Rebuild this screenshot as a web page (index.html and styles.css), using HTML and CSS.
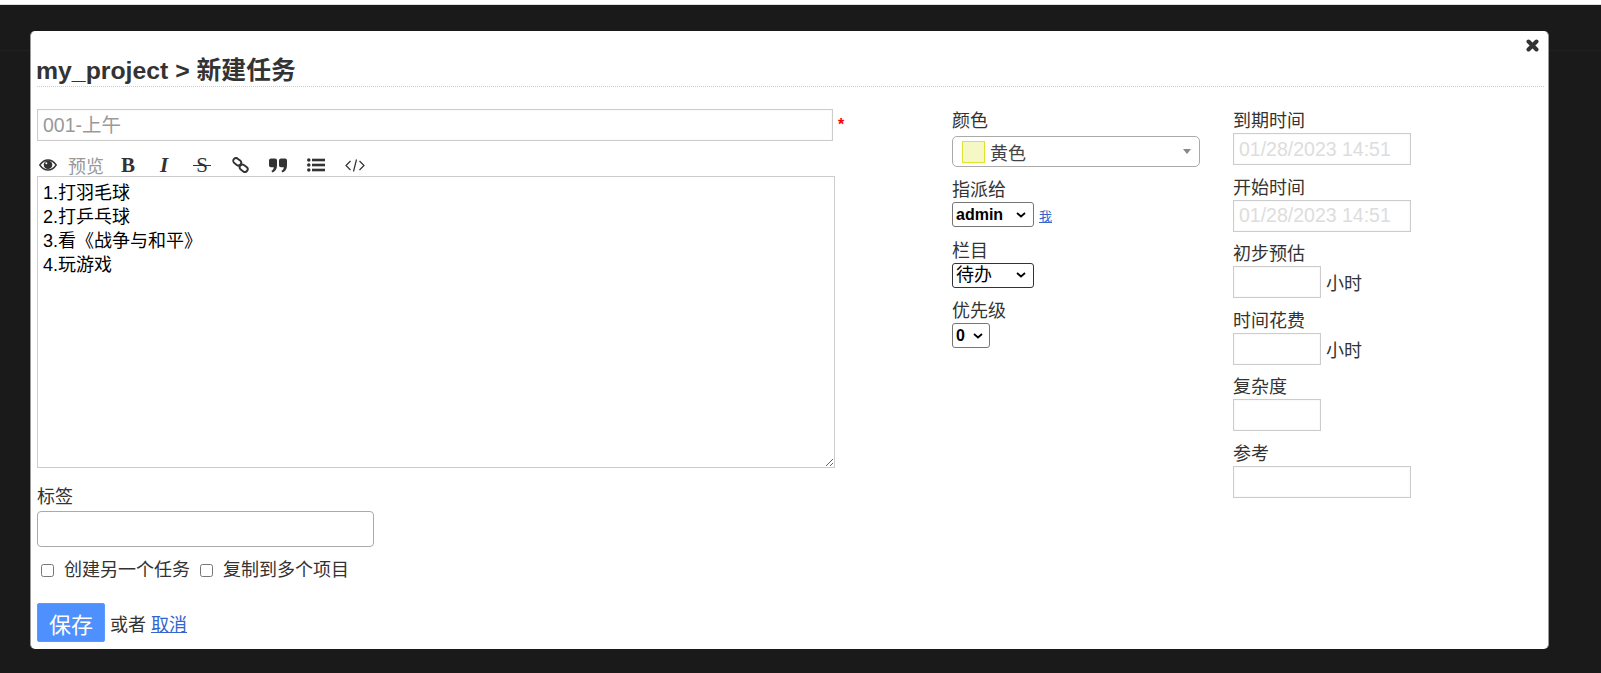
FILE: index.html
```html
<!DOCTYPE html>
<html lang="zh-CN">
<head>
    <meta charset="UTF-8">
    <title>新建任务</title>
    <link rel="stylesheet" href="styles.css">
</head>
<body>
    <div class="overlay">
        <div class="modal">
            <a class="close" href="#">
                <svg width="13" height="13" viewBox="0 0 13 13"><path d="M2.500 2.500 L10.500 10.500 M10.500 2.500 L2.500 10.500" stroke="#333" stroke-width="4" stroke-linecap="round"/></svg>
            </a>
            <h2 class="title">my_project &gt; 新建任务</h2>

            <form class="task-form">
                <!-- 左栏 -->
                <div class="col-main">
                    <div class="title-row">
                        <input class="input title-input" type="text" placeholder="001-上午">
                        <span class="required">*</span>
                    </div>
                    <div class="toolbar">
                        <svg class="tool-eye" width="18" height="12" viewBox="0 0 18 12"><path fill="none" stroke="#333" stroke-width="1.400" d="M.8 6C3.200 2.500 5.800 1 9 1s5.800 1.500 8.200 5C14.800 9.500 12.200 11 9 11S3.200 9.500.8 6z"/><circle cx="9" cy="5.800" r="4.300" fill="#333"/><circle cx="7.300" cy="4.300" r="1" fill="#fff"/></svg>
                        <span class="tool-preview">预览</span>
                        <span class="tool tool-b">B</span>
                        <span class="tool tool-i">I</span>
                        <span class="tool tool-s">S</span>
                        <svg class="tool-link" width="17" height="16" viewBox="0 0 17 16"><g fill="none" stroke="#333" stroke-width="1.900"><rect x="1" y="2" width="8.500" height="5.500" rx="2.700" transform="rotate(38 5.200 4.700)"/><rect x="7.500" y="8.500" width="8.500" height="5.500" rx="2.700" transform="rotate(38 11.700 11.200)"/></g></svg>
                        <svg class="tool-quote" width="18" height="15" viewBox="0 0 18 15"><path fill="#333" d="M0 2.500C0 1.200 1 .5 2 .5h4c1.200 0 2 .8 2 2v5c0 3.500-1.800 6-4.700 7L2.400 12.700C4 12 4.800 10.800 4.800 9.200H2c-1.200 0-2-.8-2-2zM10 2.500c0-1.300 1-2 2-2h4c1.200 0 2 .8 2 2v5c0 3.500-1.800 6-4.700 7l-.9-1.800c1.600-.7 2.400-1.900 2.400-3.500H12c-1.200 0-2-.8-2-2z"/></svg>
                        <svg class="tool-list" width="18" height="14" viewBox="0 0 18 14"><g fill="#333"><circle cx="1.800" cy="2" r="1.800"/><circle cx="1.800" cy="7" r="1.800"/><circle cx="1.800" cy="12" r="1.800"/><rect x="5" y=".7" width="13" height="2.600"/><rect x="5" y="5.700" width="13" height="2.600"/><rect x="5" y="10.700" width="13" height="2.600"/></g></svg>
                        <svg class="tool-code" width="20" height="13" viewBox="0 0 20 13"><path fill="none" stroke="#333" stroke-width="1.200" d="M5.500 2 L1 6.500 L5.500 11 M14.500 2 L19 6.500 L14.500 11 M11.500 .5 L8.500 12.500"/></svg>
                    </div>
                    <textarea class="editor">1.打羽毛球
2.打乒乓球
3.看《战争与和平》
4.玩游戏</textarea>

                    <label class="tag-label">标签</label>
                    <input class="tag-input" type="text">

                    <div class="checks">
                        <label><input type="checkbox"> 创建另一个任务</label>
                        <label><input type="checkbox"> 复制到多个项目</label>
                    </div>

                    <div class="actions">
                        <button class="btn-save" type="button">保存</button>
                        <span>或者</span>
                        <a href="#">取消</a>
                    </div>
                </div>

                <!-- 中栏 -->
                <div class="col-side">
                    <label>颜色</label>
                    <div class="color-select">
                        <span class="swatch"></span>
                        <span class="color-name">黄色</span>
                        <span class="arrow"></span>
                    </div>

                    <label class="assign-label">指派给</label>
                    <div class="field">
                        <select class="select"><option>admin</option></select>
                        <a class="me" href="#">我</a>
                    </div>

                    <label>栏目</label>
                    <div class="field">
                        <select class="select select-plain"><option>待办</option></select>
                    </div>

                    <label>优先级</label>
                    <div class="field">
                        <select class="select select-small"><option>0</option></select>
                    </div>
                </div>

                <!-- 右栏 -->
                <div class="col-dates">
                    <label>到期时间</label>
                    <input class="input date-input" type="text" placeholder="01/28/2023 14:51">

                    <label>开始时间</label>
                    <input class="input date-input" type="text" placeholder="01/28/2023 14:51">

                    <label>初步预估</label>
                    <div class="hours"><input class="input short-input" type="text"> 小时</div>

                    <label>时间花费</label>
                    <div class="hours"><input class="input short-input" type="text"> 小时</div>

                    <label>复杂度</label>
                    <input class="input short-input" type="text">

                    <label>参考</label>
                    <input class="input date-input" type="text">
                </div>
            </form>
        </div>
    </div>
</body>
</html>
```

FILE: styles.css
```css
html, body {
    margin: 0;
    padding: 0;
    overflow: hidden;
}

body {
    padding-top: 4px;
    font-family: "Liberation Sans", "Noto Sans CJK SC", sans-serif;
    font-size: 18px;
    color: #333;
    background-color: #fff;
}

.overlay {
    box-sizing: border-box;
    height: 669px;
    padding-top: 26px;
    background: linear-gradient(#202020, #202020) 0 45px / 100% 1px no-repeat, #1a1a1a;
    border-top: 1px solid #ddd;
}

.modal {
    position: relative;
    box-sizing: border-box;
    width: 1519px;
    height: 618px;
    margin-left: 30px;
    padding: 0 4px 0 6px;
    background-color: #fff;
    border-left: 1px solid #999;
    border-right: 1px solid #999;
    border-radius: 5px;
}

.close {
    position: absolute;
    top: 5px;
    right: 9px;
    display: block;
    height: 13px;
}

.title {
    margin: 0;
    padding-top: 24px;
    font-size: 24.800px;
    line-height: 31px;
    font-weight: bold;
    text-indent: -1px;
    color: #333;
    border-bottom: 1px dotted #ccc;
}

.task-form {
    display: grid;
    grid-template-columns: 915px 281px 1fr;
    margin-top: 22px;
}

label {
    display: block;
    line-height: 23px;
}

.input {
    box-sizing: border-box;
    height: 32px;
    padding: 0 5px;
    font: inherit;
    font-size: 19.500px;
    border: 1px solid #ccc;
    box-shadow: inset 0 0 1px #ccc;
    outline: none;
}

.title-row {
    display: flex;
    align-items: center;
    height: 32px;
}

.title-input {
    width: 796px;
}

.title-input::placeholder {
    color: #999;
}

.required {
    margin-left: 5px;
    color: red;
    font-size: 16px;
    font-weight: bold;
}

.toolbar {
    display: flex;
    align-items: center;
    box-sizing: border-box;
    height: 35px;
    padding-top: 13px;
}

.tool-eye {
    margin-left: 2px;
}

.tool-preview {
    width: 36px;
    margin-left: 11px;
    color: #999;
    white-space: nowrap;
}

.tool {
    width: 20px;
    text-align: center;
    font-family: "Liberation Serif", serif;
    font-size: 21px;
    line-height: 24px;
}

.tool-b {
    margin-left: 14px;
    font-weight: bold;
}

.tool-i {
    margin-left: 16px;
    font-weight: bold;
    font-style: italic;
}

.tool-s {
    width: 18px;
    margin-left: 19px;
    background: linear-gradient(#333, #333) center 52% / 100% 1px no-repeat;
}

.tool-link {
    margin-left: 21px;
}

.tool-quote {
    margin-left: 20px;
}

.tool-list {
    margin-left: 20px;
}

.tool-code {
    margin-left: 20px;
}

.editor {
    display: block;
    box-sizing: border-box;
    width: 798px;
    height: 292px;
    padding: 4px 5px;
    font: inherit;
    line-height: 24px;
    color: #000;
    border: 1px solid #ccc;
    outline: none;
}

.tag-label {
    margin-top: 18px;
    margin-bottom: 2px;
}

.tag-input {
    display: block;
    box-sizing: border-box;
    width: 337px;
    height: 36px;
    border: 1px solid #aaa;
    border-radius: 4px;
    outline: none;
}

.checks {
    display: flex;
    gap: 6px;
    margin-top: 11px;
    height: 24px;
    align-items: center;
}

.checks label {
    display: flex;
    align-items: center;
    gap: 10px;
}

.checks input {
    width: 13px;
    height: 13px;
    margin: 0 0 0 4px;
}

.actions {
    display: flex;
    align-items: center;
    gap: 5px;
    margin-top: 21px;
}

.btn-save {
    box-sizing: border-box;
    width: 68px;
    height: 39px;
    padding: 0;
    font: inherit;
    font-size: 22px;
    color: #fff;
    background-color: #4d90fe;
    border: 1px solid #5b9aff;
    border-radius: 2px;
}

a {
    color: #36c;
}

.col-side {
    padding-top: 1px;
}

.color-select {
    display: flex;
    align-items: center;
    box-sizing: border-box;
    width: 248px;
    height: 31px;
    margin-top: 3px;
    margin-bottom: 12px;
    padding-left: 9px;
    border: 1px solid #aaa;
    border-radius: 5px;
}

.swatch {
    box-sizing: border-box;
    width: 23px;
    height: 22px;
    background-color: #f5f7c4;
    border: 1px solid #dfe32d;
}

.color-name {
    flex: 1;
    margin-left: 5px;
    color: #444;
}

.arrow {
    width: 0;
    height: 0;
    margin-right: 8px;
    border-left: 4px solid transparent;
    border-right: 4px solid transparent;
    border-top: 5px solid #888;
}

.field {
    display: flex;
    align-items: flex-end;
    height: 25px;
    margin-bottom: 12.500px;
}

/* chevron is drawn here so it sits where the reference has it */
.select {
    appearance: none;
    box-sizing: border-box;
    width: 82px;
    height: 25px;
    padding: 0 0 0 3px;
    font-family: "Liberation Sans", "Noto Sans CJK SC", sans-serif;
    font-size: 16px;
    font-weight: bold;
    color: #000;
    background: #fff url("data:image/svg+xml,%3Csvg xmlns='http://www.w3.org/2000/svg' width='10' height='6'%3E%3Cpath d='M1 1l4 3.500L9 1' fill='none' stroke='%23000' stroke-width='1.800'/%3E%3C/svg%3E") no-repeat right 7px center;
    border: 1px solid #767676;
    border-radius: 3px;
}

.select-plain {
    font-size: 18px;
    font-weight: normal;
    border-color: #333;
}

.select-small {
    width: 38px;
    background-position: right 6px center;
}

.me {
    margin-left: 5px;
    font-size: 13px;
    line-height: 20px;
}

.col-dates {
    padding-top: 1px;
}

.date-input, .short-input {
    display: block;
    margin-bottom: 11.600px;
}

.date-input {
    width: 178px;
}

.date-input::placeholder {
    color: #ddd;
}

.short-input {
    width: 88px;
}

.hours {
    display: flex;
    align-items: center;
    gap: 5px;
    height: 32px;
    margin-bottom: 11.600px;
}

.hours .short-input {
    margin-bottom: 0;
}
```
